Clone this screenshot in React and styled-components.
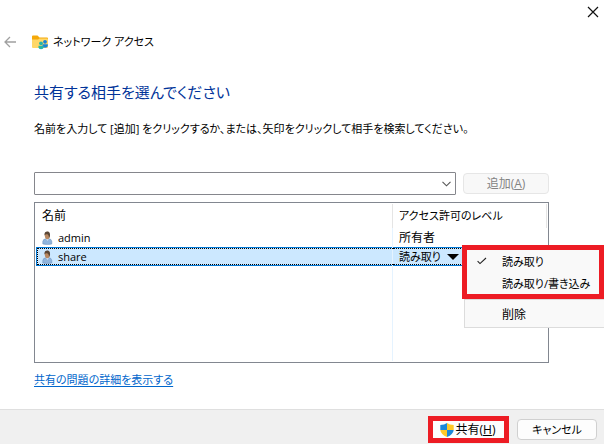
import React, { useState } from 'react';
import styled, { createGlobalStyle, css } from 'styled-components';

const GlobalStyle = createGlobalStyle`
    * {
        box-sizing: border-box;
    }
    body {
        margin: 0;
        overflow: hidden;
        background: #fff;
        color: #000;
        font-family: "Open Sans", "Noto Sans CJK JP", sans-serif;
        font-size: 11px;
        line-height: 20px;
        font-feature-settings: "palt";
    }
    button, input {
        font: inherit;
        font-feature-settings: inherit;
        color: inherit;
    }
`;

const Dialog = styled.div`
    display: flex;
    flex-direction: column;
    min-height: 100vh;
`;

const TitleBar = styled.div`
    display: flex;
    justify-content: flex-end;
    align-items: center;
    height: 24px;
    padding-right: 4px;
`;

const IconButton = styled.button`
    display: flex;
    align-items: center;
    justify-content: center;
    padding: 0;
    border: 0;
    background: none;
`;

const Header = styled.header`
    display: flex;
    align-items: center;
    height: 36px;
    padding-left: 4px;
    gap: 16px;
`;

const Caption = styled.div`
    display: flex;
    align-items: center;
    gap: 5px;
`;

const Main = styled.main`
    flex: 1;
    display: flex;
    flex-direction: column;
    padding: 20px 55px 19px 34px;
`;

const Heading = styled.h1`
    margin: 0 0 15px;
    color: #003399;
    font-size: 15px;
    font-weight: 400;
    line-height: 24px;
`;

const Guide = styled.label`
    margin-bottom: 33px;
    white-space: nowrap;
`;

const AddRow = styled.div`
    display: flex;
    align-items: center;
    gap: 7px;
    margin-bottom: 7px;
`;

const Combo = styled.div`
    flex: 1;
    display: flex;
    height: 23px;
    padding-right: 4px;
    border: 1px solid #85868c;
    border-radius: 1px;
`;

const ComboInput = styled.input`
    flex: 1;
    min-width: 0;
    padding: 0 4px;
    border: 0;
    outline: 0;
    background: none;
`;

const PushButton = styled.button`
    width: ${props => props.$width}px;
    height: 21px;
    padding: 0;
    border: 1px solid #d0d0d0;
    border-radius: 4px;
    background: #fdfdfd;
    font-size: ${props => (props.$large ? '12px' : '11px')};
    line-height: 18px;

    &:disabled {
        border-color: #e6e6e6;
        background: #f8f8f8;
        color: #838383;
    }
`;

const List = styled.div`
    flex: 1;
    display: flex;
    min-height: 120px;
    padding: 1px;
    border: 1px solid #828790;
`;

const Table = styled.table`
    width: 100%;
    table-layout: fixed;
    border-spacing: 0;
`;

const HeadCell = styled.th`
    width: ${props => props.$width};
    height: 24px;
    padding: 0 6px;
    border-right: 1px solid #e5e5e5;
    font-size: ${props => (props.$large ? '12px' : '11px')};
    font-weight: 400;
    text-align: left;
    white-space: nowrap;
`;

const Cell = styled.td`
    position: relative;
    padding: 0 6px;
    font-size: ${props => (props.$large ? '12px' : '11px')};
    line-height: 19px;
    white-space: nowrap;

    &:first-child {
        border-right: 1px solid #e5f3ff;
    }
`;

const Row = styled.tr`
    height: ${props => (props.$filler ? 'auto' : '19px')};

    ${props => props.$selected && css`
        background: #cce8ff;
        outline: 1px solid #0078d7;
        outline-offset: -1px;

        ${Cell}::after {
            content: "";
            position: absolute;
            inset: 1px 0;
            border: 0 dotted #000;
            border-width: 1px 0;
            pointer-events: none;
        }
        ${Cell}:first-child::after {
            left: 1px;
            right: -1px;
            border-left-width: 1px;
        }
    `}
`;

const UserName = styled.div`
    display: flex;
    align-items: center;
    gap: 4px;
    height: 19px;
`;

const LevelButton = styled.button`
    display: flex;
    align-items: center;
    gap: 6px;
    height: 19px;
    padding: 0;
    border: 0;
    background: none;
    line-height: 19px;
`;

const Menu = styled.div`
    position: absolute;
    top: 0;
    left: 71px;
    z-index: 2;
    width: 142px;
    padding: 2px 0;
    border: 1px solid #dcdcdc;
    background: #f9f9f9;
`;

const marker = '#ed1c24';

const MarkedGroup = styled.div`
    position: relative;

    &::after {
        content: "";
        position: absolute;
        inset: -5px 1px -5px -3px;
        border: 5px solid ${marker};
        pointer-events: none;
    }
`;

const MenuItem = styled.button`
    display: grid;
    grid-template-columns: 25px 1fr;
    align-items: center;
    width: 100%;
    height: 22px;
    padding: 0 0 0 12px;
    border: 0;
    background: none;
    font-size: ${props => (props.$large ? '12px' : '11px')};
    text-align: left;
    white-space: nowrap;
`;

const ItemText = styled.span`
    grid-column: 2;
`;

const Separator = styled.div`
    height: 9px;
    padding-top: 5px;

    &::before {
        content: "";
        display: block;
        border-top: 1px solid #dcdcdc;
    }
`;

const DetailsLink = styled.a`
    align-self: flex-start;
    margin-top: 7px;
    color: #0066cc;
    text-underline-offset: 2px;
`;

const Footer = styled.footer`
    display: flex;
    justify-content: flex-end;
    align-items: center;
    gap: 8px;
    padding: 6px 7px 1px;
    border-top: 1px solid #dfdfdf;
    background: #f0f0f0;
`;

const ShareButton = styled.button`
    display: flex;
    align-items: center;
    justify-content: center;
    gap: 2px;
    width: 81px;
    height: 27px;
    padding: 0 2px 0 0;
    border: 5px solid ${marker};
    background: #fdfdfd;
    font-size: 12px;
    line-height: 17px;
`;

const CloseIcon = () => (
    <svg width="14" height="14" viewBox="0 0 14 14" fill="none" stroke="#111" strokeWidth="1.2">
        <path d="M2 2l10 10M12 2L2 12" />
    </svg>
);

const BackIcon = () => (
    <svg width="12" height="12" viewBox="0 0 12 12" fill="none" stroke="#a0a0a0" strokeWidth="1.3">
        <path d="M12 6H1M6 1L1 6l5 5" />
    </svg>
);

const FolderIcon = () => (
    <svg width="16" height="16" viewBox="0 0 16 16">
        <path d="M0 2.500Q0 1.500 1 1.500H5.500L7.500 3.500H15Q16 3.500 16 4.500V8H0z" fill="#f5a90a" />
        <path d="M0 5.500H6L7.500 4.500H15Q16 4.500 16 5.500V13Q16 14 15 14H1Q0 14 0 13z" fill="#ffd768" />
        <circle cx="13" cy="7.800" r="1.900" fill="#1683d8" />
        <path d="M10.500 10.300H15.800V12Q15.500 13.800 13 13.800Q10.500 13.800 10.500 12z" fill="#1683d8" />
        <circle cx="9" cy="9.300" r="1.900" fill="#25b5a8" />
        <path d="M6.500 11.700H11.700V13.200Q11.500 15.200 9 15.200Q6.500 15.200 6.500 13.200z" fill="#25b5a8" />
    </svg>
);

const UserIcon = () => (
    <svg width="12" height="14" viewBox="0 0 12 14">
        <path d="M.8 13V10.500Q1 8 4 7.700H7Q9.600 8 9.800 10.500V13Q5.500 14 .8 13z" fill="#8fb4dc" stroke="#6b8fb8" strokeWidth=".5" />
        <path d="M3.800 7.500L5.500 10L7 7.500z" fill="#d5e3f2" />
        <ellipse cx="5.300" cy="4.500" rx="2.500" ry="3.700" fill="#b98962" />
        <path d="M2.500 4.500Q2 .4 5.500 .4Q8.400 .5 8 5L7 7.300Q7 3.500 5 3.200Q3.500 3 2.500 4.500z" fill="#5a4636" />
    </svg>
);

const ShieldIcon = () => (
    <svg width="14" height="14" viewBox="0 0 14 14">
        <path d="M7 0Q4.500 2 .3 2V7H7z" fill="#1c87d8" />
        <path d="M7 0Q9.500 2 13.700 2V7H7z" fill="#ffc928" />
        <path d="M.3 7H7V14Q.8 11.500 .3 7z" fill="#ffc928" />
        <path d="M13.700 7H7V14Q13.200 11.500 13.700 7z" fill="#1c87d8" />
    </svg>
);

const ChevronIcon = () => (
    <svg width="9" height="6" viewBox="0 0 9 6" fill="none" stroke="#555" strokeWidth="1.1">
        <path d="M.5 .8l4 4 4-4" />
    </svg>
);

const CaretIcon = () => (
    <svg width="12" height="6" viewBox="0 0 12 6">
        <path d="M0 0h12L6 6z" fill="#000" />
    </svg>
);

const CheckIcon = () => (
    <svg width="10" height="8" viewBox="0 0 10 8" fill="none" stroke="#222" strokeWidth="1.1">
        <path d="M.6 4.200L3 6.600L9 1" />
    </svg>
);

const levels = ['読み取り', '読み取り/書き込み'];

export default function App() {
    const [level, setLevel] = useState(levels[0]);
    const [name, setName] = useState('');

    return (
        <Dialog>
            <GlobalStyle />
            <TitleBar>
                <IconButton aria-label="閉じる"><CloseIcon /></IconButton>
            </TitleBar>
            <Header>
                <IconButton aria-label="戻る"><BackIcon /></IconButton>
                <Caption><FolderIcon />ネットワーク アクセス</Caption>
            </Header>
            <Main>
                <Heading>共有する相手を選んでください</Heading>
                <Guide htmlFor="user-name">
                    名前を入力して [追加] をクリックするか、または、矢印をクリックして相手を検索してください。
                </Guide>
                <AddRow>
                    <Combo>
                        <ComboInput id="user-name" value={name} onChange={e => setName(e.target.value)} />
                        <IconButton aria-label="検索"><ChevronIcon /></IconButton>
                    </Combo>
                    <PushButton $width={86} $large disabled={!name}>追加(<u>A</u>)</PushButton>
                </AddRow>
                <List>
                    <Table>
                        <thead>
                            <tr>
                                <HeadCell $width="auto" $large>名前</HeadCell>
                                <HeadCell $width="154px">アクセス許可のレベル</HeadCell>
                            </tr>
                        </thead>
                        <tbody>
                            <Row>
                                <Cell><UserName><UserIcon />admin</UserName></Cell>
                                <Cell $large>所有者</Cell>
                            </Row>
                            <Row $selected>
                                <Cell><UserName><UserIcon />share</UserName></Cell>
                                <Cell>
                                    <LevelButton aria-haspopup="menu">{level}<CaretIcon /></LevelButton>
                                    <Menu role="menu">
                                        <MarkedGroup>
                                            {levels.map(item => (
                                                <MenuItem
                                                    key={item}
                                                    role="menuitemradio"
                                                    aria-checked={item === level}
                                                    onClick={() => setLevel(item)}
                                                >
                                                    {item === level && <CheckIcon />}
                                                    <ItemText>{item}</ItemText>
                                                </MenuItem>
                                            ))}
                                        </MarkedGroup>
                                        <Separator />
                                        <MenuItem role="menuitem" $large><ItemText>削除</ItemText></MenuItem>
                                    </Menu>
                                </Cell>
                            </Row>
                            <Row $filler aria-hidden="true">
                                <Cell />
                                <Cell />
                            </Row>
                        </tbody>
                    </Table>
                </List>
                <DetailsLink href="#details">共有の問題の詳細を表示する</DetailsLink>
            </Main>
            <Footer>
                <ShareButton><ShieldIcon /><span>共有(<u>H</u>)</span></ShareButton>
                <PushButton $width={80}>キャンセル</PushButton>
            </Footer>
        </Dialog>
    );
}
